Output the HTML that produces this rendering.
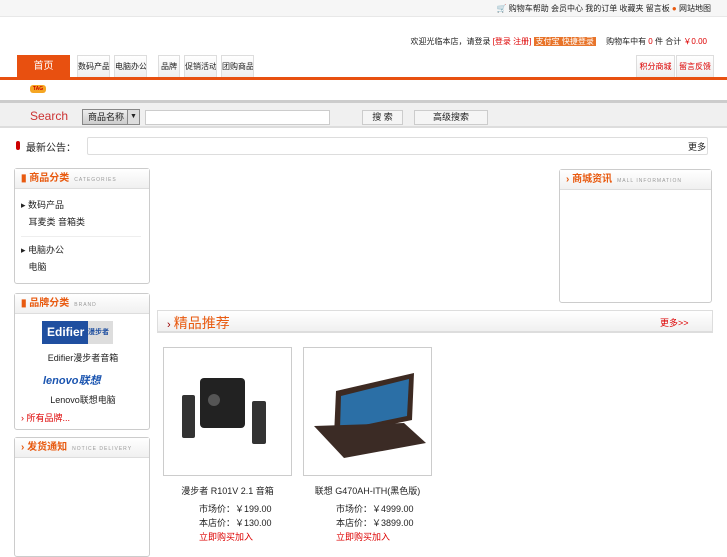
<!DOCTYPE html>
<html><head><meta charset="utf-8"><style>
*{margin:0;padding:0;box-sizing:border-box}
body{width:727px;height:545px;overflow:hidden;background:#fff;font:11px "Liberation Sans","Noto Sans CJK SC",sans-serif;color:#222;position:relative}
.a{position:absolute;white-space:nowrap}
.tab{position:absolute;top:55px;height:22px;background:linear-gradient(#fff,#eee);border:1px solid #ddd;border-bottom:none;text-align:center;line-height:22px;font-size:8px;white-space:nowrap;overflow:hidden}
.box{position:absolute;border:1px solid #ccc;border-radius:3px;background:#fff}
.bh{height:20px;background:linear-gradient(#fff,#f0f0f0);border-bottom:1px solid #ddd;line-height:20px;padding-left:6px;color:#e85a10;font-weight:bold;font-size:10px;white-space:nowrap}
.bh small{font-size:5px;color:#999;font-weight:normal;margin-left:5px;letter-spacing:1px}
.pimg{position:absolute;top:347px;width:129px;height:129px;border:1px solid #ccc}
</style></head><body>
<div class="a" style="left:0;top:0;width:727px;height:17px;background:#f6f6f6;border-bottom:1px solid #e8e8e8"></div>
<div class="a" style="right:16px;top:3px;font-size:8px">🛒 购物车帮助 会员中心 我的订单 收藏夹 留言板 <span style="color:#e85a10">●</span> 网站地图</div>
<div class="a" style="right:20px;top:36px;font-size:8px">欢迎光临本店，请登录 <span style="color:#d00">[登录 注册]</span> <span style="background:#e8742a;color:#fff;padding:0 2px">支付宝 快捷登录</span> 　购物车中有 <span style="color:#d00">0</span> 件 合计 <span style="color:#d00">￥0.00</span></div>
<div class="tab" style="left:17px;width:53px;background:#e85010;border-color:#e85010;color:#fff;font-size:10px">首页</div>
<div class="tab" style="left:77px;width:33px">数码产品</div>
<div class="tab" style="left:114px;width:33px">电脑办公</div>
<div class="tab" style="left:158px;width:22px">品牌</div>
<div class="tab" style="left:184px;width:33px">促销活动</div>
<div class="tab" style="left:221px;width:33px">团购商品</div>
<div class="tab" style="left:636px;width:39px;color:#d00">积分商城</div>
<div class="tab" style="left:676px;width:38px;color:#d00">留言反馈</div>
<div class="a" style="left:0;top:77px;width:727px;height:3px;background:#e85010"></div>
<div class="a" style="left:30px;top:85px;width:16px;height:8px;background:#f5a623;border-radius:3px;font-size:5px;color:#c00;line-height:8px;text-align:center;font-weight:bold">TAG</div>
<div class="a" style="left:0;top:100px;width:727px;height:28px;background:#f0f0f0;border-top:3px solid #ccc;border-bottom:2px solid #ddd"></div>
<div class="a" style="left:30px;top:109px;font-size:12px;color:#c33">Search</div>
<div class="a" style="left:82px;top:109px;width:58px;height:16px;border:1px solid #888;background:linear-gradient(#eee,#ccc);font-size:9px;padding-left:5px;line-height:14px">商品名称<span style="position:absolute;right:0;top:0;width:12px;height:14px;background:#ddd;border-left:1px solid #888;font-size:7px;text-align:center">▼</span></div>
<div class="a" style="left:145px;top:110px;width:185px;height:15px;border:1px solid #ccc;background:#fff"></div>
<div class="a" style="left:362px;top:110px;width:41px;height:15px;border:1px solid #ccc;background:#f5f5f5;text-align:center;font-size:9px;line-height:13px">搜 索</div>
<div class="a" style="left:414px;top:110px;width:74px;height:15px;border:1px solid #ccc;background:#f5f5f5;text-align:center;font-size:9px;line-height:13px">高级搜索</div>
<div class="a" style="left:16px;top:141px;width:4px;height:9px;background:#c00;border-radius:2px"></div>
<div class="a" style="left:26px;top:139px;font-size:10px">最新公告：</div>
<div class="a" style="left:87px;top:137px;width:621px;height:18px;border:1px solid #ddd;border-radius:2px"></div>
<div class="a" style="left:688px;top:140px;font-size:9px">更多</div>

<div class="box" style="left:14px;top:168px;width:136px;height:116px"><div class="bh">▮ 商品分类<small>CATEGORIES</small></div>
<div style="padding:8px 0 0 6px;line-height:17px;font-size:9px">▸ 数码产品<br>&nbsp;&nbsp; 耳麦类 音箱类<div style="border-top:1px solid #eee;margin:5px 8px 5px 0"></div>▸ 电脑办公<br>&nbsp;&nbsp; 电脑</div></div>

<div class="box" style="left:14px;top:293px;width:136px;height:137px"><div class="bh">▮ 品牌分类<small>BRAND</small></div>
<div class="a" style="left:27px;top:27px;width:71px;height:23px;background:#1f4fa0;color:#fff;font-weight:bold;font-size:12px;line-height:23px;padding-left:5px">Edifier<span style="position:absolute;right:0;top:0;width:25px;height:23px;background:#ddd;color:#1f4fa0;font-size:7px">漫步者</span></div>
<div class="a" style="left:0;top:57px;width:136px;text-align:center;font-size:9px">Edifier漫步者音箱</div>
<div class="a" style="left:28px;top:78px;color:#1b55b0;font-style:italic;font-weight:bold;font-size:11px">lenovo联想</div>
<div class="a" style="left:0;top:99px;width:136px;text-align:center;font-size:9px">Lenovo联想电脑</div>
<div class="a" style="left:6px;top:117px;color:#d00;font-size:9px">› 所有品牌...</div></div>

<div class="box" style="left:14px;top:437px;width:136px;height:120px"><div class="bh">› 发货通知<small>NOTICE DELIVERY</small></div></div>

<div class="box" style="left:559px;top:169px;width:153px;height:134px"><div class="bh">› 商城资讯<small>MALL INFORMATION</small></div></div>

<div class="a" style="left:157px;top:310px;width:556px;height:23px;background:linear-gradient(#fff,#f0f0f0);border:1px solid #ddd;border-bottom:2px solid #ddd"></div>
<div class="a" style="left:167px;top:313px;font-size:14px;color:#e85a10"><span style="color:#900;font-size:11px">› </span>精品推荐</div>
<div class="a" style="left:660px;top:316px;color:#d00;font-size:9px">更多&gt;&gt;</div>

<div class="pimg" style="left:163px">
<svg width="129" height="129"><rect x="36" y="30" width="45" height="50" rx="4" fill="#222"/><circle cx="50" cy="52" r="6" fill="#555"/><rect x="18" y="47" width="13" height="43" rx="2" fill="#333"/><rect x="88" y="53" width="14" height="43" rx="2" fill="#333"/></svg></div>
<div class="pimg" style="left:303px">
<svg width="129" height="129"><polygon points="32,43 110,25 108,72 30,88" fill="#3d2a22"/><polygon points="37,48 105,31 103,68 36,82" fill="#2b6fa6"/><polygon points="10,78 100,75 122,95 40,110" fill="#3b2b25"/></svg></div>
<div class="a" style="left:163px;top:484px;width:129px;text-align:center;font-size:9px">漫步者 R101V 2.1 音箱</div>
<div class="a" style="left:303px;top:484px;width:129px;text-align:center;font-size:9px">联想 G470AH-ITH(黑色版)</div>
<div class="a" style="left:199px;top:502px;font-size:9px;line-height:14px">市场价：￥199.00<br>本店价：￥130.00<br><span style="color:#d00">立即购买加入</span></div>
<div class="a" style="left:336px;top:502px;font-size:9px;line-height:14px">市场价：￥4999.00<br>本店价：￥3899.00<br><span style="color:#d00">立即购买加入</span></div>
</body></html>
